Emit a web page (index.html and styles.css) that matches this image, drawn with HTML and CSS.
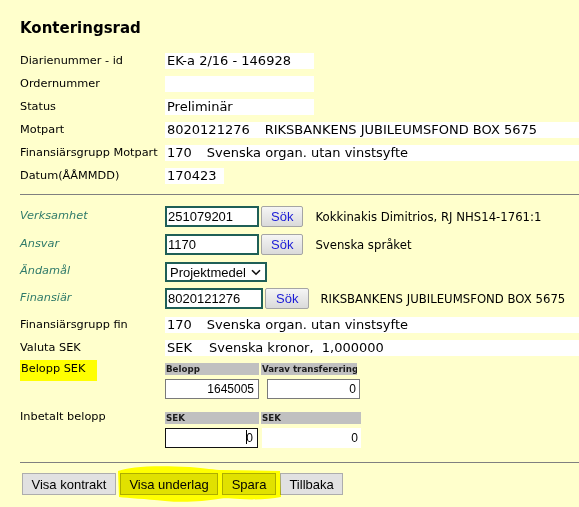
FILE: index.html
```html
<!DOCTYPE html>
<html lang="sv">
<head>
<meta charset="utf-8">
<title>Konteringsrad</title>
<link rel="stylesheet" href="styles.css">
</head>
<body>
<div class="page">
  <h1 class="title">Konteringsrad</h1>

  <div class="info">
    <div class="lbl">Diarienummer - id</div><div class="val w149">EK-a 2/16 - 146928</div>
    <div class="lbl">Ordernummer</div><div class="val w149"></div>
    <div class="lbl">Status</div><div class="val w149">Preliminär</div>
    <div class="lbl">Motpart</div><div class="val">8020121276<span class="sep">RIKSBANKENS JUBILEUMSFOND BOX 5675</span></div>
    <div class="lbl">Finansiärsgrupp Motpart</div><div class="val">170<span class="sep">Svenska organ. utan vinstsyfte</span></div>
    <div class="lbl">Datum(ÅÅMMDD)</div><div class="val w59">170423</div>
  </div>

  <div class="rule"></div>

  <div class="lookup">
    <div class="lrow">
      <div class="ilbl">Verksamhet</div>
      <input class="field" type="text" value="251079201">
      <button class="sok" type="button">Sök</button>
      <div class="desc">Kokkinakis Dimitrios, RJ NHS14-1761:1</div>
    </div>
    <div class="lrow">
      <div class="ilbl">Ansvar</div>
      <input class="field" type="text" value="1170">
      <button class="sok" type="button">Sök</button>
      <div class="desc">Svenska språket</div>
    </div>
    <div class="lrow lrow-sel">
      <div class="ilbl">Ändamål</div>
      <span class="selwrap">
        <select class="sel"><option>Projektmedel</option></select>
        <svg class="chev" width="10" height="7" viewBox="0 0 10 7"><path d="M1 1.2 L5 5.2 L9 1.2" fill="none" stroke="#111" stroke-width="1.6"/></svg>
      </span>
    </div>
    <div class="lrow">
      <div class="ilbl">Finansiär</div>
      <input class="field wide" type="text" value="8020121276">
      <button class="sok sok-wide" type="button">Sök</button>
      <div class="desc desc-wide">RIKSBANKENS JUBILEUMSFOND BOX 5675</div>
    </div>
  </div>

  <div class="info info2">
    <div class="lbl">Finansiärsgrupp fin</div><div class="val">170<span class="sep">Svenska organ. utan vinstsyfte</span></div>
    <div class="lbl">Valuta SEK</div><div class="val">SEK<span class="sep2">Svenska kronor,&nbsp; 1,000000</span></div>
  </div>

  <div class="amount">
    <div class="alb"><span class="hl">Belopp SEK</span></div>
    <div class="amt-grid">
      <div class="th">Belopp</div>
      <div class="th th-short">Varav transferering</div>
      <input class="num" type="text" value="1645005">
      <input class="num num-off" type="text" value="0">
    </div>
  </div>

  <div class="amount amount2">
    <div class="alb alb2">Inbetalt belopp</div>
    <div class="amt-grid">
      <div class="th">SEK</div>
      <div class="th">SEK</div>
      <div class="num num-focus"><span class="caret"></span>0</div>
      <div class="plain">0</div>
    </div>
  </div>

  <div class="rule rule2"></div>

  <div class="actions">
    <button class="btn" type="button">Visa kontrakt</button>
    <button class="btn" type="button">Visa underlag</button>
    <button class="btn" type="button">Spara</button>
    <button class="btn" type="button">Tillbaka</button>
    <svg class="marker" width="579" height="44" viewBox="0 463 579 44">
      <path d="M118,471 C130,467 150,465 190,467 C205,468 215,470 222,470 L280,471 L281,497 C270,499 255,500 240,499 C228,498 222,498 218,499 C205,501 185,503 165,501 C145,499 128,498 119,497 Z" fill="#ffff00"/>
    </svg>
  </div>
</div>
</body>
</html>
```

FILE: styles.css
```css
* { box-sizing: border-box; }
html, body { margin: 0; background: #ffffcc; }
body {
  font-family: "DejaVu Sans", Verdana, sans-serif;
  font-size: 11px;
  color: #000;
}
.page {
  padding: 19px 0 12px 20px;
  width: 579px;
  overflow: hidden;
}
.title {
  font-size: 15px;
  font-weight: bold;
  line-height: 18px;
  margin: 0;
}
.info {
  display: grid;
  grid-template-columns: 145px 1fr;
  grid-auto-rows: 16px;
  row-gap: 7px;
  margin-top: 16px;
}
.info2 { margin-top: 8px; }
.lbl {
  font-size: 11.3px;
  line-height: 16px;
  white-space: nowrap;
}
.val {
  background: #fff;
  font-size: 13px;
  line-height: 16px;
  padding-left: 2px;
  white-space: nowrap;
  overflow: hidden;
}
.w149 { width: 149px; }
.w59 { width: 59px; }
.sep { margin-left: 15px; }
.sep2 { margin-left: 17px; }
.rule {
  height: 0;
  border-top: 1px solid #808080;
  margin-top: 10px;
}
.rule2 { margin-top: 14px; }

.lookup {
  margin-top: 11px;
  display: flex;
  flex-direction: column;
  gap: 7px;
}
.lrow {
  display: flex;
  align-items: center;
  height: 21px;
}
.lrow-sel { height: 20px; margin-bottom: -1px; }
.ilbl {
  width: 145px;
  font-style: italic;
  color: #2f7a6a;
  font-size: 11.3px;
  margin-top: -3px;
}
.field {
  height: 21px;
  width: 94px;
  border: 2px solid #1f5f57;
  background: #fff;
  font: 13px "Liberation Sans", Arial, sans-serif;
  color: #000;
  padding: 0 1px;
  margin: 0;
  outline: none;
}
.field.wide { width: 98px; }
.sok {
  height: 21px;
  margin: 0 0 0 2px;
  padding: 0 9px;
  font: 13px "Liberation Sans", Arial, sans-serif;
  color: #1a1ad6;
  background: linear-gradient(#f5f5f5, #dadada);
  border: 1px solid #a5a5a5;
  border-radius: 2px;
}
.sok-wide { padding: 0 10px; }
.desc { margin-left: 12px; font-size: 11.7px; white-space: nowrap; }
.desc-wide { margin-left: 11px; }
.selwrap { position: relative; display: inline-block; height: 20px; }
.sel {
  appearance: none;
  -webkit-appearance: none;
  width: 102px;
  height: 20px;
  border: 2px solid #1f5f57;
  border-radius: 0;
  background: #fff;
  font: 13px "Liberation Sans", Arial, sans-serif;
  color: #000;
  padding: 0 0 0 3px;
  margin: 0;
  outline: none;
}
.chev {
  position: absolute;
  left: 86px;
  top: 7px;
  pointer-events: none;
}

.amount {
  display: grid;
  grid-template-columns: 145px auto;
  margin-top: 7px;
}
.amount2 { margin-top: 13px; }
.alb { font-size: 11.3px; line-height: 12px; }
.alb2 { margin-top: -1px; }
.hl {
  display: inline-block;
  background: #ffff00;
  height: 21px;
  line-height: 17px;
  margin-top: -4px;
  padding: 0 12px 0 1px;
}
.amt-grid {
  display: grid;
  grid-template-columns: 94px 100px;
  grid-template-rows: 12px 20px;
  column-gap: 2px;
  row-gap: 4px;
}
.th {
  background: #c0c0c0;
  font: bold 8.7px "DejaVu Sans", Verdana, sans-serif;
  line-height: 12px;
  padding-left: 1px;
  color: #1c1c1c;
  white-space: nowrap;
  overflow: hidden;
}
.th-short { width: 96px; }
.num {
  height: 20px;
  width: 94px;
  border: 1px solid #7a7a7a;
  background: #fff;
  font: 12px "Liberation Sans", Arial, sans-serif;
  color: #000;
  text-align: right;
  padding: 0 4px 0 0;
  margin: 0;
  outline: none;
}
.num-off { margin-left: 6px; width: 93px; padding-right: 3px; }
.num-focus {
  border: 1px solid #111;
  line-height: 18px;
  width: 93px;
  padding-right: 4px;
}
.caret {
  display: inline-block;
  width: 1px;
  height: 14px;
  background: #000;
  vertical-align: -2px;
  margin-right: -1px;
}
.plain {
  background: #fff;
  height: 20px;
  width: 99px;
  margin-left: 1px;
  font: 12px "Liberation Sans", Arial, sans-serif;
  line-height: 20px;
  text-align: right;
  padding-right: 3px;
}

.actions {
  position: relative;
  display: flex;
  gap: 4px;
  margin-top: 10px;
  padding-left: 2px;
}
.btn {
  height: 22px;
  padding: 0 8.5px;
  margin: 0;
  font: 13px "Liberation Sans", Arial, sans-serif;
  color: #000;
  background: #e1e1e1;
  border: 1px solid #adadad;
  border-radius: 0;
}
.marker {
  position: absolute;
  left: -20px;
  top: -10px;
  pointer-events: none;
  mix-blend-mode: multiply;
}
```
